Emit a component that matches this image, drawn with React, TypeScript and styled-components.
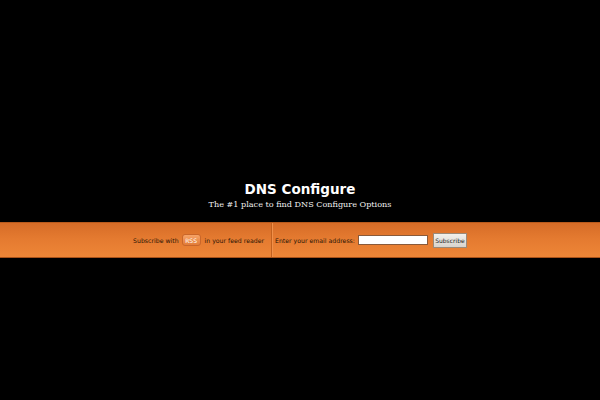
import React from "react";
import styled, { createGlobalStyle } from "styled-components";

const Global = createGlobalStyle`
  html, body { margin: 0; padding: 0; background: #000; }
  body { width: 600px; height: 400px; overflow: hidden; }
`;

const Page = styled.div`
  display: flex;
  flex-direction: column;
  width: 600px;
  height: 400px;
  background: #000;
`;

const Header = styled.header`
  height: 222px;
  display: flex;
  flex-direction: column;
  align-items: center;
  justify-content: flex-end;
  padding-bottom: 12px;
  box-sizing: border-box;
`;

const Title = styled.h1`
  margin: 0;
  font-family: "DejaVu Sans", sans-serif;
  font-weight: bold;
  font-size: 13.5px;
  line-height: 17px;
  color: #fff;
`;

const Tagline = styled.p`
  margin: 0;
  font-family: "DejaVu Serif", serif;
  font-size: 8.1px;
  line-height: 12px;
  color: #f0f0f0;
`;

const Bar = styled.div`
  height: 36px;
  box-sizing: border-box;
  border-top: 1px solid #b85a1c;
  border-bottom: 1px solid #a8521a;
  background: linear-gradient(to bottom, #d66c27 0%, #e47a30 45%, #ee8637 100%);
  display: flex;
  justify-content: center;
  align-items: stretch;
`;

const Section = styled.div<{ $left?: boolean }>`
  display: flex;
  align-items: center;
  padding: 0 ${(p) => (p.$left ? "7px" : "0")} 0 ${(p) => (p.$left ? "0" : "3px")};
  font-family: "DejaVu Sans", sans-serif;
  font-size: 6.2px;
  color: #2a1404;
  ${(p) =>
    p.$left
      ? `border-right: 1px solid #c2611f; box-shadow: 1px 0 0 #f0904a;`
      : ""}
`;

const Rss = styled.span`
  display: inline-flex;
  align-items: center;
  justify-content: center;
  width: 19px;
  height: 12px;
  box-sizing: border-box;
  border-radius: 3px;
  background: linear-gradient(to bottom, #f7a468, #e27c38);
  border: 1px solid #c9662a;
  color: #fff;
  font-size: 6px;
  margin: 0 4px 0 3px;
`;

const EmailInput = styled.input`
  width: 70px;
  height: 10px;
  box-sizing: border-box;
  border: 1px solid #8a5a3a;
  background: #fff;
  padding: 0;
  margin: 0 5px 0 3px;
`;

const SubscribeButton = styled.button`
  height: 15px;
  width: 34px;
  box-sizing: border-box;
  padding: 0;
  border: 1px solid #9a8a7a;
  background: linear-gradient(to bottom, #f2f0ec, #d8d4ce);
  font-family: "DejaVu Sans", sans-serif;
  font-size: 6px;
  color: #222;
`;

export default function App() {
  return (
    <Page>
      <Global />
      <Header>
        <Title>DNS Configure</Title>
        <Tagline>The #1 place to find DNS Configure Options</Tagline>
      </Header>
      <Bar>
        <Section $left>
          <span>Subscribe with</span>
          <Rss>RSS</Rss>
          <span>in your feed reader</span>
        </Section>
        <Section>
          <span>Enter your email address:</span>
          <EmailInput type="text" />
          <SubscribeButton>Subscribe</SubscribeButton>
        </Section>
      </Bar>
    </Page>
  );
}
